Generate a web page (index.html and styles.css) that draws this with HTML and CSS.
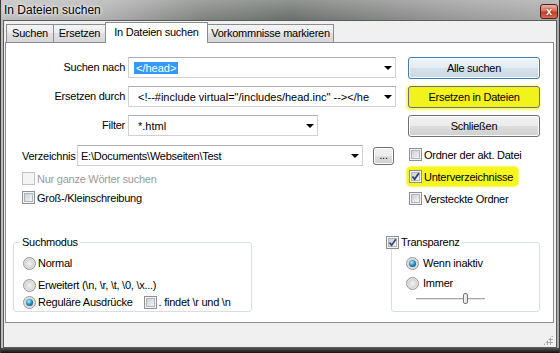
FILE: index.html
```html
<!DOCTYPE html>
<html lang="de">
<head>
  <meta charset="UTF-8">
  <title>In Dateien suchen</title>
  <link rel="stylesheet" href="styles.css">
</head>
<body>

<div class="window">
  <div class="titlebar">
    <span class="title">In Dateien suchen</span>
    <span class="close">x</span>
  </div>

  <div class="client">
    <div class="tabs">
      <span class="tab t1">Suchen</span>
      <span class="tab t2">Ersetzen</span>
      <span class="tab t3 active">In Dateien suchen</span>
      <span class="tab t4">Vorkommnisse markieren</span>
    </div>

    <div class="panel">
      <div class="fields">
        <span class="lbl">Suchen nach</span>
        <div class="combo"><span class="val"><span class="sel">&lt;/head&gt;</span></span><i class="arrow"></i></div>
        <span class="btn default">Alle suchen</span>

        <span class="lbl">Ersetzen durch</span>
        <div class="combo"><span class="val">&lt;!--#include virtual="/includes/head.inc" --&gt;&lt;/he</span><i class="arrow"></i></div>
        <span class="btn marked">Ersetzen in Dateien</span>

        <span class="lbl">Filter</span>
        <div class="combo short"><span class="val">*.html</span><i class="arrow"></i></div>
        <span class="btn">Schließen</span>
      </div>

      <div class="mid">
        <div class="left">
          <div class="dir-row">
            <span class="dir-lbl">Verzeichnis</span>
            <div class="combo dir"><span class="val">E:\Documents\Webseiten\Test</span><i class="arrow"></i></div>
            <span class="btn dots">...</span>
          </div>
          <label class="check disabled"><span class="box"></span>Nur ganze Wörter suchen</label>
          <label class="check"><span class="box"></span>Groß-/Kleinschreibung</label>
        </div>
        <div class="right">
          <label class="check"><span class="box"></span>Ordner der akt. Datei</label>
          <label class="check marked"><span class="box on"><svg width="11" height="11" viewBox="0 0 11 11"><path d="M2.5 5.5 L4.6 8.2 L8.8 2.2" fill="none" stroke="#33415f" stroke-width="1.8"/></svg></span>Unterverzeichnisse</label>
          <label class="check"><span class="box"></span>Versteckte Ordner</label>
        </div>
      </div>

      <div class="groups">
        <fieldset class="group mode">
          <legend>Suchmodus</legend>
          <label class="radio r1"><span class="dot"></span>Normal</label>
          <label class="radio r2"><span class="dot"></span>Erweitert (\n, \r, \t, \0, \x...)</label>
          <div class="radio r3">
            <span class="dot on"></span>Reguläre Ausdrücke
            <label class="check inline"><span class="box"></span>. findet \r und \n</label>
          </div>
        </fieldset>

        <fieldset class="group trans">
          <legend><label class="check"><span class="box on"><svg width="11" height="11" viewBox="0 0 11 11"><path d="M2.5 5.5 L4.6 8.2 L8.8 2.2" fill="none" stroke="#3b4d7c" stroke-width="1.8"/></svg></span>Transparenz</label></legend>
          <label class="radio w1"><span class="dot on"></span>Wenn inaktiv</label>
          <label class="radio w2"><span class="dot"></span>Immer</label>
          <div class="slider"><span class="thumb"></span></div>
        </fieldset>
      </div>
    </div>

    <div class="status"><span class="grip"></span></div>
  </div>
</div>

</body>
</html>
```

FILE: styles.css
```css
* {
  box-sizing: border-box;
}
body {
  margin: 0;
  background: #2a2a2a;
  font-family: "Liberation Sans", Arial, sans-serif;
  font-size: 11px;
  letter-spacing: -0.25px;
  color: #000;
}

/* window frame */
.window {
  width: 560px;
  height: 353px;
  padding-bottom: 5px;
  background:
    linear-gradient(#555, #111) bottom / 100% 5px no-repeat,
    linear-gradient(rgba(255,255,255,0.25), rgba(255,255,255,0) 20px),
    linear-gradient(90deg, #bdbdbd 0%, #b0b0b0 18%, #7f827f 36%, #6b6f6c 52%, #848684 68%, #9b9b9b 84%, #a9a9a9 100%);
  box-shadow: inset 1px 0 0 #3a3a3a, inset -1px 0 0 #3a3a3a;
}
.titlebar {
  height: 20px;
  display: flex;
  justify-content: space-between;
  align-items: center;
  padding: 0 2px 0 4px;
}
.title {
  font-size: 12px;
  letter-spacing: 0;
  text-shadow: 0 0 5px #fff, 0 0 3px #fff;
}
.close {
  align-self: flex-start;
  margin-top: 4px;
  width: 18px;
  height: 15px;
  border: 1px solid #4f2219;
  border-radius: 3px;
  background: linear-gradient(#eeb0a2, #d9715f 45%, #c43f2e 55%, #d76a52);
  color: #fff;
  font-weight: bold;
  font-size: 11px;
  line-height: 12px;
  text-align: center;
  text-shadow: 0 0 2px #400;
}
.client {
  margin: 0 3px;
  height: 328px;
  border: 1px solid #5b5b5b;
  background: #f0f0f0;
  padding: 0 2px 0 1px;
  display: flex;
  flex-direction: column;
}

/* tabs */
.tabs {
  height: 21px;
  display: flex;
  align-items: flex-start;
  padding-left: 1px;
}
.tab {
  height: 18px;
  margin-top: 3px;
  margin-right: -1px;
  border: 1px solid #898c95;
  border-bottom: 0;
  background: linear-gradient(#f4f4f4, #ececec 50%, #e0e0e0 50%, #d6d6d6);
  text-align: center;
  line-height: 17px;
  white-space: nowrap;
}
.tab.active {
  position: relative;
  z-index: 1;
  height: 21px;
  margin-top: 1px;
  background: #fff;
  line-height: 19px;
}
.t1 { width: 48px; }
.t2 { width: 53px; }
.t3 { width: 103px; }
.t4 { width: 127px; }

.panel {
  height: 281px;
  border: 1px solid #898c95;
  background: #fff;
  padding: 14px 0 0 16px;
}

/* top fields */
.fields {
  display: grid;
  grid-template-columns: 106px 280px 132px;
  grid-auto-rows: 22px;
  row-gap: 7px;
  align-items: start;
}
.lbl {
  text-align: right;
  padding-right: 3px;
  line-height: 21px;
  white-space: nowrap;
}
.combo {
  display: flex;
  align-items: center;
  width: 268px;
  height: 21px;
  border: 1px solid #cdd0d6;
  border-top-color: #abadb3;
  background: #fff;
}
.combo.short { width: 190px; }
.combo.dir { width: 286px; }
.combo .val {
  flex: 1;
  overflow: hidden;
  white-space: nowrap;
  padding-left: 9px;
  letter-spacing: 0;
}
.combo.dir .val {
  padding-left: 3px;
  letter-spacing: -0.25px;
}
.sel {
  margin-left: -4px;
  padding: 1px 2px;
  background: #3399ff;
  color: #fff;
}
.arrow {
  flex: none;
  width: 0;
  height: 0;
  border-left: 4px solid transparent;
  border-right: 4px solid transparent;
  border-top: 4px solid #000;
  margin: 0 3px 0 4px;
}

.btn {
  display: flex;
  align-items: center;
  justify-content: center;
  height: 22px;
  border: 1px solid #707070;
  border-radius: 3px;
  background: linear-gradient(#f2f2f2, #ebebeb 50%, #dddddd 50%, #cfcfcf);
  box-shadow: inset 0 0 0 1px #fcfcfc;
  white-space: nowrap;
}
.btn.default {
  border-color: #3c7fb1;
  background: linear-gradient(#eef4f9, #e3ecf3 50%, #d5e1eb 50%, #cad9e6);
}
.btn.marked {
  background: #f3f31c;
  box-shadow: -1px 1px 3px 1px #f5f560;
}
.btn.dots {
  width: 21px;
  height: 18px;
  margin-left: 10px;
  padding-bottom: 2px;
}

/* middle part */
.mid {
  display: flex;
  margin-top: 8px;
  height: 63px;
}
.left {
  width: 387px;
  display: flex;
  flex-direction: column;
}
.dir-row {
  display: flex;
  align-items: center;
  height: 21px;
  margin-bottom: 3px;
}
.dir-lbl {
  width: 55px;
  white-space: nowrap;
}
.right {
  display: flex;
  flex-direction: column;
  gap: 3px;
}

.check {
  display: flex;
  align-items: center;
  gap: 2px;
  height: 19px;
  white-space: nowrap;
}
.check.disabled { color: #9a9a9a; }
.check.marked {
  align-self: flex-start;
  margin-left: -2px;
  padding: 0 5px 0 2px;
  background: #f6f61c;
  border-radius: 4px;
  box-shadow: 0 0 2px 1px #f6f650;
}
.box {
  flex: none;
  display: flex;
  align-items: center;
  justify-content: center;
  width: 13px;
  height: 13px;
  border: 1px solid #8e8f8f;
  padding: 2px;
  background:
    linear-gradient(135deg, #cbcfd5, #f5f5f5) content-box,
    linear-gradient(#b0b5bb, #b0b5bb) padding-box;
  box-shadow: inset 0 0 0 1px #f4f4f4;
}
.disabled .box {
  border-color: #c2c2c2;
  background: #f4f4f4;
  box-shadow: none;
}
.box svg {
  flex: none;
  margin: -2px;
}

/* group boxes */
.groups {
  display: flex;
  justify-content: space-between;
  width: 527px;
  margin: 28px 0 0 -9px;
}
.group {
  margin: 0;
  min-width: 0;
  border: 1px solid #d5dfe5;
  border-radius: 3px;
  padding: 0 0 1px 6px;
}
.group legend {
  padding: 0 2px;
  line-height: 13px;
}
.mode { width: 239px; }
.trans {
  width: 149px;
  padding-left: 14px;
}
.trans legend {
  margin-left: -20px;
  padding: 0 2px 0 0;
}
.trans legend .check { height: 13px; }

.radio {
  display: flex;
  align-items: center;
  gap: 2px;
  height: 16px;
  white-space: nowrap;
}
.mode .radio { margin-left: 3px; }
.r1 { margin-top: 6px; }
.r2 { margin-top: 6px; }
.r3 { margin-top: 1px; }
.w1 { margin-top: 6px; gap: 4px; }
.w2 { margin-top: 4px; gap: 4px; }
.check.inline { margin-left: 9px; }

.dot {
  flex: none;
  display: flex;
  align-items: center;
  justify-content: center;
  width: 13px;
  height: 13px;
  border-radius: 50%;
  border: 1px solid #949494;
  background: radial-gradient(circle, #f3f3f3 0, #d6d6d6 55%, #f6f6f6 80%);
}
.dot.on::after {
  content: "";
  width: 7px;
  height: 7px;
  border-radius: 50%;
  background: radial-gradient(circle at 40% 35%, #c4f0fc 0, #42a9da 35%, #17638f 70%, #0d3a57 100%);
}

.slider {
  display: flex;
  width: 69px;
  height: 12px;
  margin: 2px 0 0 10px;
  background:
    linear-gradient(#a8a8a8, #a8a8a8) 0 5px / 100% 1px no-repeat,
    linear-gradient(#e4e4e4, #e4e4e4) 0 6px / 100% 1px no-repeat;
}
.thumb {
  width: 5px;
  height: 11px;
  margin-left: 47px;
  border: 1px solid #7a7a7a;
  border-radius: 2px;
  background: linear-gradient(90deg, #f8f8f8, #dcdcdc);
}

/* bottom band */
.status {
  flex: 1;
  display: flex;
  justify-content: flex-end;
  align-items: flex-end;
  padding: 0 1px 2px 0;
}
.grip {
  width: 10px;
  height: 10px;
  background: radial-gradient(circle, #9a9a9a 0.9px, transparent 1.3px) 0 0 / 3px 3px;
  clip-path: polygon(100% 0, 100% 100%, 0 100%);
}
```
